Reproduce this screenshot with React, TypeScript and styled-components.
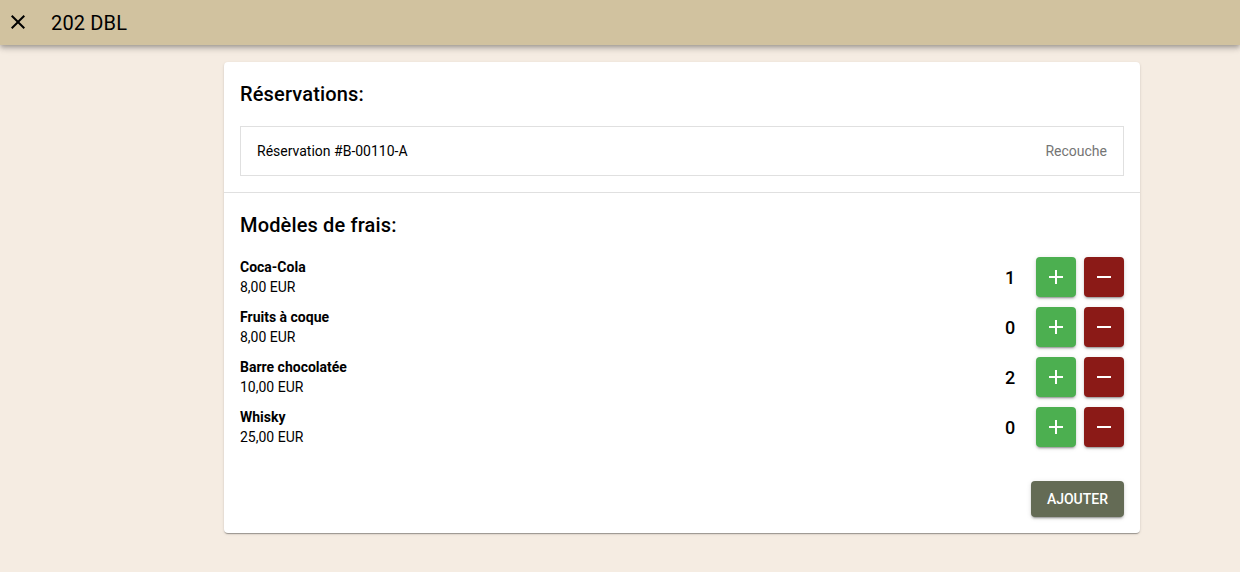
import React, { useState } from "react";
import styled, { createGlobalStyle } from "styled-components";

const GlobalStyle = createGlobalStyle`
  html, body {
    margin: 0;
    padding: 0;
    background: #f5ece2;
    font-family: Roboto, "Noto Sans", "Liberation Sans", sans-serif;
    color: #000;
  }
  * {
    box-sizing: border-box;
  }
`;

const Page = styled.div`
  min-height: 572px;
  background: #f5ece2;
`;

const TopBar = styled.header`
  height: 45px;
  background: #d1c29f;
  display: flex;
  align-items: center;
  padding: 0 6px;
  box-shadow: 0 2px 4px -1px rgba(0, 0, 0, 0.2), 0 4px 5px 0 rgba(0, 0, 0, 0.14),
    0 1px 10px 0 rgba(0, 0, 0, 0.12);
  position: relative;
  z-index: 1;
`;

const CloseButton = styled.button`
  width: 24px;
  height: 24px;
  padding: 0;
  border: 0;
  background: transparent;
  display: flex;
  align-items: center;
  justify-content: center;
  cursor: pointer;
  margin-top: -2px;
`;

const Title = styled.h1`
  margin: 0 0 0 21px;
  font-size: 20px;
  font-weight: 400;
  letter-spacing: 0.15px;
`;

const Content = styled.main`
  padding: 17px 100px 0 224px;
`;

const Card = styled.section`
  background: #fff;
  border-radius: 4px;
  box-shadow: 0 2px 1px -1px rgba(0, 0, 0, 0.2), 0 1px 1px 0 rgba(0, 0, 0, 0.14),
    0 1px 3px 0 rgba(0, 0, 0, 0.12);
`;

const Section = styled.div<{ $divider?: boolean }>`
  padding: 16px;
  border-bottom: ${(p) => (p.$divider ? "1px solid #e0e0e0" : "none")};
  display: flex;
  flex-direction: column;
`;

const Heading = styled.h2`
  margin: 0 0 16px;
  font-size: 20px;
  line-height: 32px;
  font-weight: 500;
  letter-spacing: 0.15px;
`;

const BookingBox = styled.div`
  height: 50px;
  border: 1px solid #e0e0e0;
  display: flex;
  align-items: center;
  justify-content: space-between;
  padding: 0 16px;
  font-size: 14px;
`;

const BookingType = styled.span`
  color: #757575;
`;

const FeeList = styled.div`
  display: flex;
  flex-direction: column;
  gap: 10px;
`;

const FeeRow = styled.div`
  height: 40px;
  display: flex;
  align-items: center;
`;

const FeeInfo = styled.div`
  flex: 1;
  font-size: 14px;
`;

const FeeName = styled.div`
  font-weight: 700;
  line-height: 21px;
`;

const FeePrice = styled.div`
  line-height: 19px;
`;

const Count = styled.span`
  width: 20px;
  text-align: center;
  font-size: 18px;
  font-weight: 500;
  margin-right: 16px;
`;

const SquareButton = styled.button<{ $tone: "add" | "remove" }>`
  width: 40px;
  height: 40px;
  padding: 0;
  border: 0;
  border-radius: 4px;
  margin-left: ${(p) => (p.$tone === "remove" ? "8px" : "0")};
  background: ${(p) => (p.$tone === "add" ? "#4caf50" : "#8b1a17")};
  display: flex;
  align-items: center;
  justify-content: center;
  cursor: pointer;
  box-shadow: 0 3px 1px -2px rgba(0, 0, 0, 0.2), 0 2px 2px 0 rgba(0, 0, 0, 0.14),
    0 1px 5px 0 rgba(0, 0, 0, 0.12);
`;

const Footer = styled.div`
  display: flex;
  justify-content: flex-end;
  margin-top: 34px;
`;

const SubmitButton = styled.button`
  height: 36px;
  padding: 0 16px;
  border: 0;
  border-radius: 4px;
  background: #646b55;
  color: #fff;
  font-family: inherit;
  font-size: 14px;
  font-weight: 500;
  letter-spacing: 0;
  text-transform: uppercase;
  cursor: pointer;
  box-shadow: 0 3px 1px -2px rgba(0, 0, 0, 0.2), 0 2px 2px 0 rgba(0, 0, 0, 0.14),
    0 1px 5px 0 rgba(0, 0, 0, 0.12);
`;

const Icon = ({ d, color }: { d: string; color: string }) => (
  <svg width="24" height="24" viewBox="0 0 24 24" fill={color}>
    <path d={d} />
  </svg>
);

const CLOSE =
  "M19 6.41 17.59 5 12 10.59 6.41 5 5 6.41 10.59 12 5 17.59 6.41 19 12 13.41 17.59 19 19 17.59 13.41 12z";
const ADD = "M19 13h-6v6h-2v-6H5v-2h6V5h2v6h6v2z";
const REMOVE = "M19 13H5v-2h14v2z";

const initialFees = [
  { name: "Coca-Cola", price: "8,00 EUR", count: 1 },
  { name: "Fruits à coque", price: "8,00 EUR", count: 0 },
  { name: "Barre chocolatée", price: "10,00 EUR", count: 2 },
  { name: "Whisky", price: "25,00 EUR", count: 0 },
];

const App: React.FC = () => {
  const [fees, setFees] = useState(initialFees);

  const change = (index: number, delta: number) => {
    setFees((list) =>
      list.map((fee, i) =>
        i === index ? { ...fee, count: Math.max(0, fee.count + delta) } : fee
      )
    );
  };

  return (
    <Page>
      <GlobalStyle />
      <TopBar>
        <CloseButton type="button" aria-label="Fermer">
          <Icon d={CLOSE} color="#000" />
        </CloseButton>
        <Title>202 DBL</Title>
      </TopBar>
      <Content>
        <Card>
          <Section $divider>
            <Heading>Réservations:</Heading>
            <BookingBox>
              <span>Réservation #B-00110-A</span>
              <BookingType>Recouche</BookingType>
            </BookingBox>
          </Section>
          <Section>
            <Heading>Modèles de frais:</Heading>
            <FeeList>
              {fees.map((fee, index) => (
                <FeeRow key={fee.name}>
                  <FeeInfo>
                    <FeeName>{fee.name}</FeeName>
                    <FeePrice>{fee.price}</FeePrice>
                  </FeeInfo>
                  <Count>{fee.count}</Count>
                  <SquareButton
                    type="button"
                    $tone="add"
                    onClick={() => change(index, 1)}
                  >
                    <Icon d={ADD} color="#fff" />
                  </SquareButton>
                  <SquareButton
                    type="button"
                    $tone="remove"
                    onClick={() => change(index, -1)}
                  >
                    <Icon d={REMOVE} color="#fff" />
                  </SquareButton>
                </FeeRow>
              ))}
            </FeeList>
            <Footer>
              <SubmitButton type="button">Ajouter</SubmitButton>
            </Footer>
          </Section>
        </Card>
      </Content>
    </Page>
  );
};

export default App;
